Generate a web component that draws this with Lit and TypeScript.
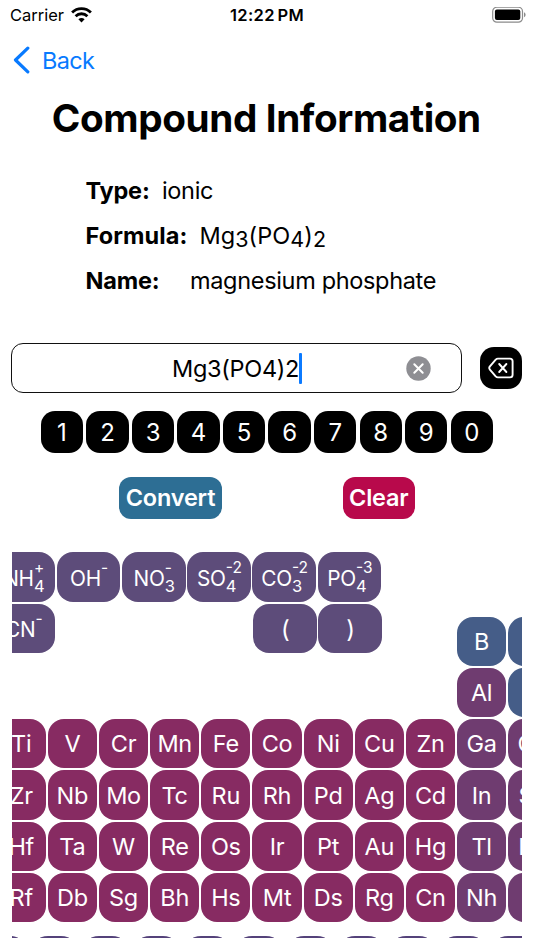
import { LitElement, html, css, svg, nothing } from "lit";
import { customElement } from "lit/decorators.js";
import { styleMap } from "lit/directives/style-map.js";

interface Ion {
  base: string;
  sup?: string;
  sub?: string;
}

const IONS: Ion[] = [
  { base: "NH", sup: "+", sub: "4" },
  { base: "OH", sup: "-" },
  { base: "NO", sup: "-", sub: "3" },
  { base: "SO", sup: "-2", sub: "4" },
  { base: "CO", sup: "-2", sub: "3" },
  { base: "PO", sup: "-3", sub: "4" },
];

// Each entry is one period, starting at the given grid column.
const PERIODS: { row: number; start: number; symbols: string[] }[] = [
  { row: 1, start: 10, symbols: ["B", "C"] },
  { row: 2, start: 10, symbols: ["Al", "Si"] },
  { row: 3, start: 1, symbols: ["Ti", "V", "Cr", "Mn", "Fe", "Co", "Ni", "Cu", "Zn", "Ga", "Ge"] },
  { row: 4, start: 1, symbols: ["Zr", "Nb", "Mo", "Tc", "Ru", "Rh", "Pd", "Ag", "Cd", "In", "Sn"] },
  { row: 5, start: 1, symbols: ["Hf", "Ta", "W", "Re", "Os", "Ir", "Pt", "Au", "Hg", "Tl", "Pb"] },
  { row: 6, start: 1, symbols: ["Rf", "Db", "Sg", "Bh", "Hs", "Mt", "Ds", "Rg", "Cn", "Nh", "Fl"] },
];

const METALLOIDS = new Set(["B", "C", "Si"]);

@customElement("app-root")
export class AppRoot extends LitElement {
  static styles = css`
    :host {
      display: block;
      width: 534px;
      height: 950px;
      overflow: hidden;
      background: #fff;
      color: #000;
      font-family: Inter, "Liberation Sans", sans-serif;
      font-size: 23.5px;
      font-weight: 400;
      font-kerning: normal;
    }
    * { box-sizing: border-box; }
    svg { display: block; }

    .status {
      display: grid;
      grid-template-columns: 1fr auto 1fr;
      align-items: center;
      height: 30px;
      padding: 0 8px 0 10px;
      font-size: 16.5px;
    }
    .carrier { display: flex; align-items: center; gap: 7px; }
    .carrier-name { letter-spacing: 0; }
    .clock { font-weight: 600; letter-spacing: 0.35px; word-spacing: -2px; margin-left: -2px; }
    .battery { justify-self: end; }

    .nav {
      display: flex;
      align-items: center;
      height: 60px;
      padding-left: 13px;
      gap: 12px;
      color: #087aff;
    }
    .back { letter-spacing: -0.7px; }

    h1 {
      margin: 0 1.4px 0 0;
      height: 56px;
      line-height: 56px;
      text-align: center;
      font-size: 38.7px;
      font-weight: 700;
      letter-spacing: -0.4px;
    }

    .facts { padding: 22px 0 0 85.5px; }
    .fact { display: flex; height: 45.2px; line-height: 45.2px; white-space: pre; }
    .label { font-weight: 700; letter-spacing: -0.2px; }
    .type .label { width: 76.5px; }
    .formula .label { width: 114px; letter-spacing: 0.1px; }
    .name .label { width: 104.5px; }
    .value { letter-spacing: -0.33px; }
    .formula .value { letter-spacing: 0.05px; }
    .low { position: relative; top: 3px; font-size: 21.5px; }

    .entry { display: flex; align-items: center; gap: 18.5px; height: 50px; margin: 39.5px 0 0 11px; }
    .field {
      display: flex;
      align-items: center;
      width: 450.5px;
      height: 50px;
      border: 1.4px solid #111;
      border-radius: 12px;
      padding: 0 29.5px 0 160px;
    }
    .field .value { letter-spacing: -0.3px; }
    .caret { width: 2.6px; height: 31px; background: #0b7aff; border-radius: 1px; }
    .wipe { margin-left: auto; }
    .erase, .digit { display: grid; place-items: center; width: 42.4px; height: 42.4px; border-radius: 14px; background: #000; color: #fff; }
    .digit { font-size: 24px; padding-top: 0.6px; }

    .digits { display: flex; gap: 3.15px; margin: 17.8px 0 0 40.8px; }

    .actions { display: flex; height: 42px; margin: 23.6px 0 0 119px; gap: 120.5px; }
    .action { display: grid; place-items: center; border-radius: 12px; color: #fff; font-weight: 600; letter-spacing: -0.2px; }
    .convert { width: 103px; background: #2d6e94; }
    .clear { width: 72.5px; background: #b8094b; }

    .board {
      display: grid;
      grid-template: 385.3px / 510.4px;
      width: 510.4px;
      height: 385.3px;
      margin: 33.6px 0 0 11.8px;
      overflow: hidden;
      color: #fff;
    }
    .ions, .table { grid-area: 1 / 1; }
    .ions { margin-left: -20.1px; z-index: 1; align-self: start; }
    .ion-row { display: flex; gap: 1.7px; margin-bottom: 1.9px; }
    .ion {
      display: flex;
      flex: none;
      align-items: center;
      justify-content: center;
      width: 63.5px;
      height: 49.4px;
      border-radius: 16px;
      background: #5d4c7a;
      font-size: 20.8px;
      letter-spacing: -0.2px;
      padding-left: 0.8px;
    }
    .paren { font-size: 24px; padding-top: 2px; }
    .blank { flex: none; width: 194.6px; }
    .base { padding-top: 2px; }
    .stack { display: grid; grid-template-rows: 18.4px 18.4px; line-height: 18.4px; font-size: 15.5px; letter-spacing: 0; }
    .mark { height: 18.4px; }
    .mark + .mark { font-size: 16.5px; }

    .table { margin: 64.5px 0 0 -15.2px; width: 562px; }
    .elements, .series { display: grid; gap: 1.97px; grid-auto-rows: 49.2px; }
    .elements { grid-template-columns: repeat(11, 49.2px); }
    .series { grid-template-columns: repeat(11, 49.2px); margin: 13.6px 0 0 -18px; }
    .element { display: grid; place-items: center; border-radius: 16px; background: #872b62; letter-spacing: -0.3px; }
    .post { background: #6f3c70; }
    .metalloid { background: #455d88; }
    .rare { border-radius: 18px; background: #54427a; }
  `;

  private renderIon(ion: Ion) {
    return html`<div class="ion">
      <span class="base">${ion.base}</span>
      <span class="stack"><span class="mark">${ion.sup}</span><span class="mark">${ion.sub ?? nothing}</span></span>
    </div>`;
  }

  private renderElement(symbol: string, row: number, column: number) {
    const group = METALLOIDS.has(symbol) ? "metalloid" : column > 9 ? "post" : "";
    return html`<div class="element ${group}" style=${styleMap({ gridArea: `${row} / ${column}` })}>${symbol}</div>`;
  }

  private wifi = svg`<svg width="21" height="16" viewBox="0 0 21 16" fill="none" stroke="#000">
    <path d="M1.1 5.6C6.3 .4 14.7 .4 19.9 5.6" stroke-width="2.8"/>
    <path d="M4.6 9.2C7.9 5.9 13.1 5.9 16.4 9.2" stroke-width="2.8"/>
    <path d="M10.5 15.4L7.4 12.2C9.2 10.5 11.8 10.5 13.6 12.2Z" fill="#000" stroke="none"/>
  </svg>`;

  render() {
    return html`
      <div class="status">
        <div class="carrier"><span class="carrier-name">Carrier</span>${this.wifi}</div>
        <div class="clock">12:22 PM</div>
        <svg class="battery" width="34" height="17" viewBox="0 0 34 17">
          <rect x=".7" y=".2" width="29.8" height="15" rx="4.2" fill="#fff" stroke="#8b8b8b" stroke-width="1.2"/>
          <rect x="2.9" y="2.4" width="25.4" height="10.6" rx="2" fill="#000"/>
          <path d="M32 5.2C34.1 6.1 34.1 9.3 32 10.2Z" fill="#8b8b8b"/>
        </svg>
      </div>
      <div class="nav">
        <svg width="17" height="28" viewBox="0 0 17 28" fill="none" stroke="currentColor" stroke-width="3.2" stroke-linecap="round" stroke-linejoin="round">
          <path d="M14.8 2.2L2.5 14L14.8 25.8"/>
        </svg>
        <span class="back">Back</span>
      </div>
      <h1>Compound Information</h1>
      <div class="facts">
        <div class="fact type"><span class="label">Type:</span><span class="value">ionic</span></div>
        <div class="fact formula"><span class="label">Formula:</span><span class="value">Mg<span class="low">3</span>(PO<span class="low">4</span>)<span class="low">2</span></span></div>
        <div class="fact name"><span class="label">Name:</span><span class="value">magnesium phosphate</span></div>
      </div>
      <div class="entry">
        <div class="field">
          <span class="value">Mg3(PO4)2</span><span class="caret"></span>
          <svg class="wipe" width="25" height="25" viewBox="0 0 25 25">
            <circle cx="12.5" cy="12.5" r="12.2" fill="#8e8e93"/>
            <path d="M8.3 8.3L16.7 16.7M16.7 8.3L8.3 16.7" stroke="#fff" stroke-width="2" stroke-linecap="round"/>
          </svg>
        </div>
        <div class="erase">
          <svg width="26" height="22" viewBox="0 0 26 22" fill="none" stroke="#fff" stroke-width="1.9" stroke-linecap="round" stroke-linejoin="round">
            <path d="M9.9 1.6H22C23.7 1.6 24.6 2.5 24.6 4.2V17.8C24.6 19.5 23.7 20.4 22 20.4H9.9C9 20.4 8.4 20.1 7.7 19.4L1.9 12.6C1 11.5 1 10.5 1.9 9.4L7.7 2.6C8.4 1.9 9 1.6 9.9 1.6Z"/>
            <path d="M11.2 7L18.4 15M18.4 7L11.2 15"/>
          </svg>
        </div>
      </div>
      <div class="digits">${[..."1234567890"].map((d) => html`<div class="digit">${d}</div>`)}</div>
      <div class="actions">
        <div class="action convert">Convert</div>
        <div class="action clear">Clear</div>
      </div>
      <div class="board">
        <div class="ions">
          <div class="ion-row">${IONS.map((ion) => this.renderIon(ion))}</div>
          <div class="ion-row">
            ${this.renderIon({ base: "CN", sup: "-" })}
            <div class="blank"></div>
            <div class="ion paren">(</div>
            <div class="ion paren">)</div>
          </div>
        </div>
        <div class="table">
          <div class="elements">
            ${PERIODS.map((p) => p.symbols.map((s, i) => this.renderElement(s, p.row, p.start + i)))}
          </div>
          <div class="series">${Array.from({ length: 11 }, () => html`<div class="rare"></div>`)}</div>
        </div>
      </div>
    `;
  }
}
